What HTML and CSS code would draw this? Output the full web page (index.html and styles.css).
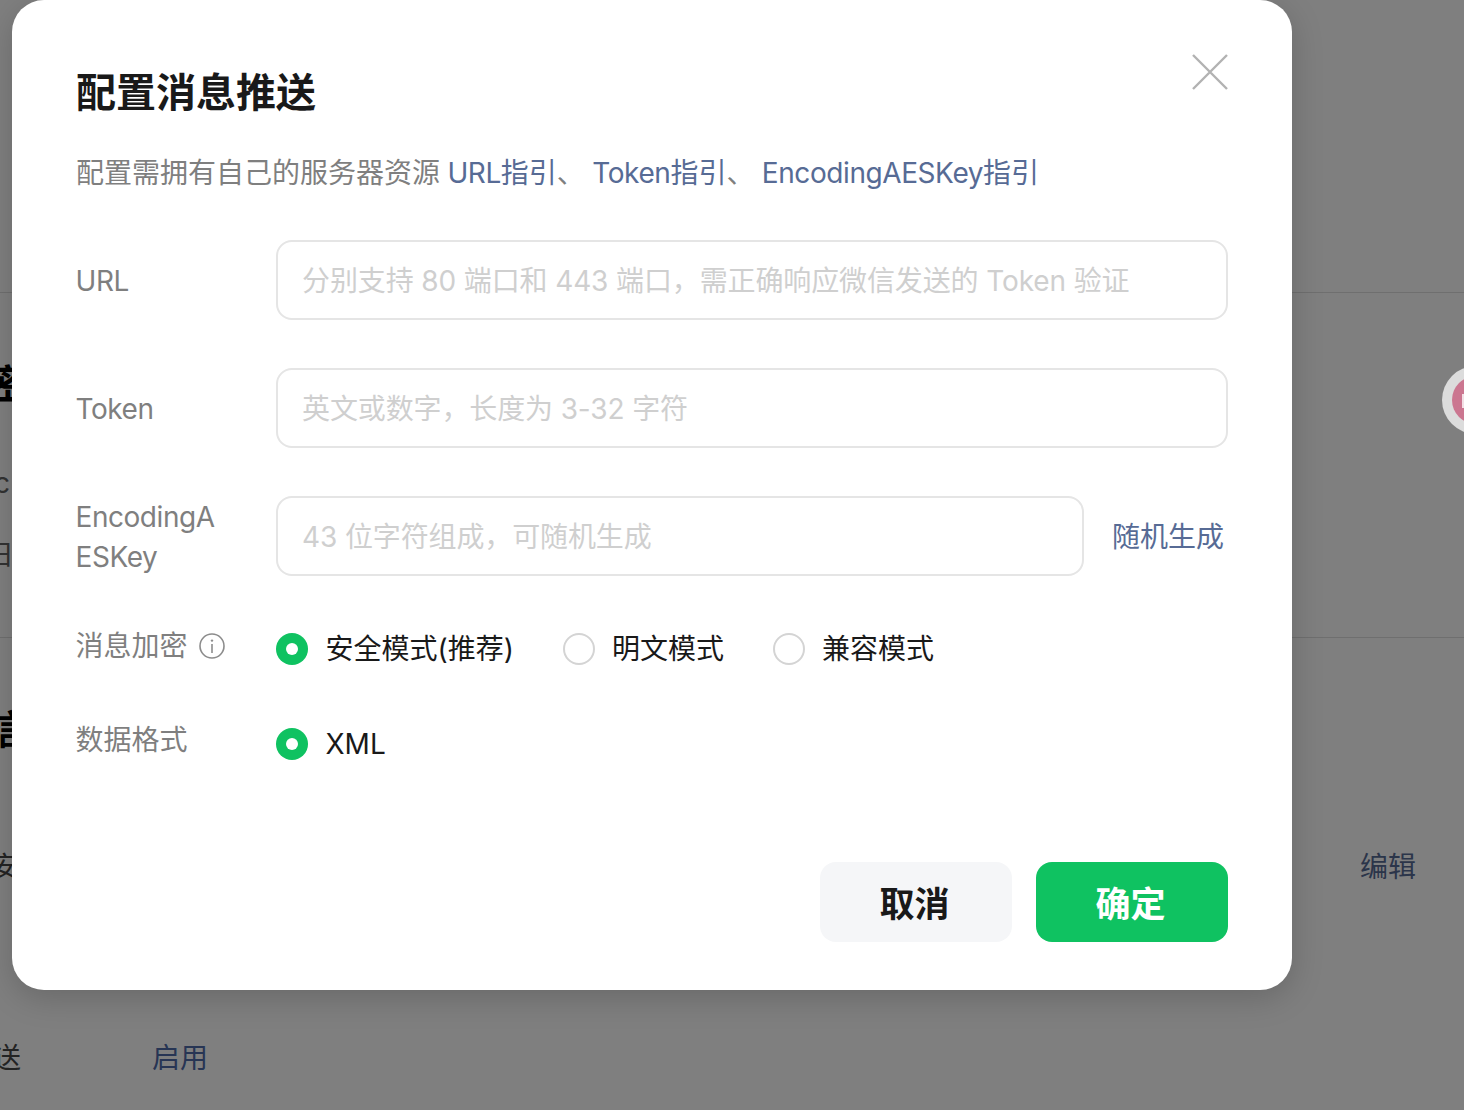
FILE: index.html
```html
<!DOCTYPE html>
<html lang="zh-CN">
<head>
<meta charset="utf-8">
<title>配置消息推送</title>
<link rel="stylesheet" href="styles.css">
</head>
<body>
<div class="page">
  <div class="rule rule-top"></div>
  <div class="rule rule-mid"></div>
  <span class="peek peek-bold peek-mi">密</span>
  <span class="peek peek-c">c</span>
  <span class="peek peek-ri">日</span>
  <span class="peek peek-bold peek-yu">信</span>
  <span class="peek peek-an">安</span>
  <span class="peek peek-song">送</span>
  <a class="peek peek-link peek-enable">启用</a>
  <a class="peek peek-link peek-edit">编辑</a>

  <div class="scrim"></div>

  <div class="float-badge"><span class="float-dot"></span></div>

  <section class="dialog">
    <button class="close" aria-label="关闭">
      <svg viewBox="0 0 36 36" width="36" height="36"><path d="M1 1 35 35M35 1 1 35" fill="none" stroke="#b2b2b2" stroke-width="2.4"/></svg>
    </button>
    <h1 class="title">配置消息推送</h1>
    <p class="desc">配置需拥有自己的服务器资源 <a><span class="lat">URL</span>指引</a>、 <a><span class="lat">Token</span>指引</a>、 <a><span class="lat">EncodingAESKey</span>指引</a></p>

    <form class="form">
      <div class="row row-input">
        <label class="label lat">URL</label>
        <input class="input" placeholder="分别支持 80 端口和 443 端口，需正确响应微信发送的 Token 验证">
      </div>
      <div class="row row-input">
        <label class="label lat">Token</label>
        <input class="input" placeholder="英文或数字，长度为 3-32 字符">
      </div>
      <div class="row row-input">
        <label class="label label-wrap lat">EncodingAESKey</label>
        <input class="input" placeholder="43 位字符组成，可随机生成">
        <a class="random">随机生成</a>
      </div>
      <div class="row row-radio row-encrypt">
        <span class="label label-info">消息加密
          <svg class="info" viewBox="0 0 26 26" width="26" height="26"><circle cx="13" cy="13" r="12" fill="none" stroke="#8c8c8c" stroke-width="1.6"/><circle cx="13" cy="7.6" r="1.2" fill="#8c8c8c"/><path d="M13 11v9" stroke="#8c8c8c" stroke-width="1.6"/></svg>
        </span>
        <div class="radios">
          <span class="radio-item"><i class="radio on"></i>安全模式(推荐)</span>
          <span class="radio-item"><i class="radio"></i>明文模式</span>
          <span class="radio-item"><i class="radio"></i>兼容模式</span>
        </div>
      </div>
      <div class="row row-radio row-format">
        <span class="label">数据格式</span>
        <div class="radios">
          <span class="radio-item"><i class="radio on"></i>XML</span>
        </div>
      </div>
    </form>

    <footer class="actions">
      <button class="btn btn-cancel">取消</button>
      <button class="btn btn-ok">确定</button>
    </footer>
  </section>
</div>
</body>
</html>
```

FILE: styles.css
```css
* { box-sizing: border-box; }
html, body { margin: 0; height: 100%; }
body {
  overflow: hidden;
  background: #fff;
  font-family: Inter, "Noto Sans CJK SC", sans-serif;
  font-size: 28px;
  color: #191919;
}
.page { position: relative; width: 1464px; height: 1110px; overflow: hidden; background: #fff; }
.scrim { position: absolute; inset: 0; background: rgba(0, 0, 0, .5); }

.rule { position: absolute; left: 0; right: 0; height: 1px; background: #dedede; }
.rule-top { top: 292px; }
.rule-mid { top: 637px; }
.peek { position: absolute; line-height: 40px; font-size: 28px; color: #191919; opacity: .9; }
.peek-bold { font-size: 40px; font-weight: 700; line-height: 48px; color: #000; opacity: 1; }
.peek-mi { left: -12px; top: 361px; }
.peek-c { left: -6px; top: 463px; color: #555; }
.peek-ri { left: -14px; top: 535px; color: #555; }
.peek-yu { left: -14px; top: 706px; }
.peek-an { left: -9px; top: 847px; color: #333; }
.peek-song { left: -7px; top: 1038px; color: #333; }
.peek-link { color: #576b95; opacity: 1; }
.peek-enable { left: 152px; top: 1038px; color: #4f6aa8; }
.peek-edit { left: 1360px; top: 847px; }
.float-badge {
  position: absolute; left: 1442px; top: 366px;
  width: 68px; height: 68px; border-radius: 50%;
  background: #dcdcdc; padding: 10px;
}
.float-dot { position: relative; display: block; width: 100%; height: 100%; border-radius: 50%; background: #cb7690; }
.float-dot::after {
  content: ""; position: absolute; left: 10px; top: 18px;
  width: 2px; height: 14px; background: #f3dfe5;
}

.dialog {
  position: absolute; left: 12px; top: 0;
  width: 1280px; height: 990px;
  padding: 0 64px;
  background: #fff;
  border-radius: 32px;
  box-shadow: 0 8px 32px rgba(0, 0, 0, .18);
  display: flex; flex-direction: column;
}
.close {
  position: absolute; right: 64px; top: 54px;
  width: 36px; height: 36px; padding: 0;
  border: 0; background: none; display: block;
}
.close svg { display: block; }
.title { margin: 65px 0 0; font-size: 40px; line-height: 56px; font-weight: 700; color: #191919; }
.desc { margin: 32px 0 0; font-size: 28px; line-height: 40px; color: #7f7f7f; white-space: nowrap; word-spacing: -.5px; }
.desc a { color: #576b95; }
.lat { letter-spacing: -.45px; }
.desc .lat { letter-spacing: -.42px; }

.form { margin-top: 47px; display: flex; flex-direction: column; }
.row { display: flex; align-items: center; }
.row-input { height: 80px; margin-bottom: 48px; }
.row-input:nth-child(3) { margin-bottom: 0; }
.label { flex: 0 0 200px; margin-left: -.5px; padding-right: 50px; font-size: 28px; line-height: 40px; color: #7f7f7f; }
.row-input .label { padding-top: 2px; }
.label-wrap { word-break: break-all; }
.label-info { display: flex; align-items: center; gap: 12px; padding-right: 0; white-space: nowrap; }
.info { flex: none; margin-left: -1px; }
.input {
  flex: 1; min-width: 0; height: 80px;
  padding: 2px 24px 0 24.5px;
  border: 2px solid #e5e5e5; border-radius: 16px;
  background: transparent; outline: 0;
  font: inherit; color: #191919; letter-spacing: -.12px;
}
.input::placeholder { color: #cfcfcf; opacity: 1; }
.random { margin-left: 28px; margin-right: 4px; padding-top: 2px; color: #576b95; line-height: 40px; white-space: nowrap; }

.row-radio { align-items: flex-start; }
.row-encrypt { margin-top: 50px; }
.row-format { margin-top: 52px; }
.row-format .label { margin-top: -1px; }
.radios { display: flex; gap: 49px; margin-top: 3px; }
.radio-item { display: flex; align-items: center; gap: 17px; line-height: 40px; color: #191919; }
.radio-item:first-child { gap: 18px; }
.radio {
  flex: none; width: 32px; height: 32px; border-radius: 50%;
  border: 2px solid #d4d4d4; background: #fff; position: relative;
}
.radio.on { border: 0; background: #0fc261; }
.radio.on::after {
  content: ""; position: absolute; left: 10px; top: 10px;
  width: 12px; height: 12px; border-radius: 50%; background: #fff;
}

.actions { margin-top: auto; margin-bottom: 48px; display: flex; justify-content: flex-end; gap: 24px; }
.btn {
  width: 192px; height: 80px; padding: 0 3px 2px 0; border: 0; border-radius: 16px;
  font-family: inherit; font-size: 35px; font-weight: 700; letter-spacing: 0;
}
.btn-cancel { background: #f5f6f8; color: #191919; }
.btn-ok { background: #0fc261; color: #fff; }
```
